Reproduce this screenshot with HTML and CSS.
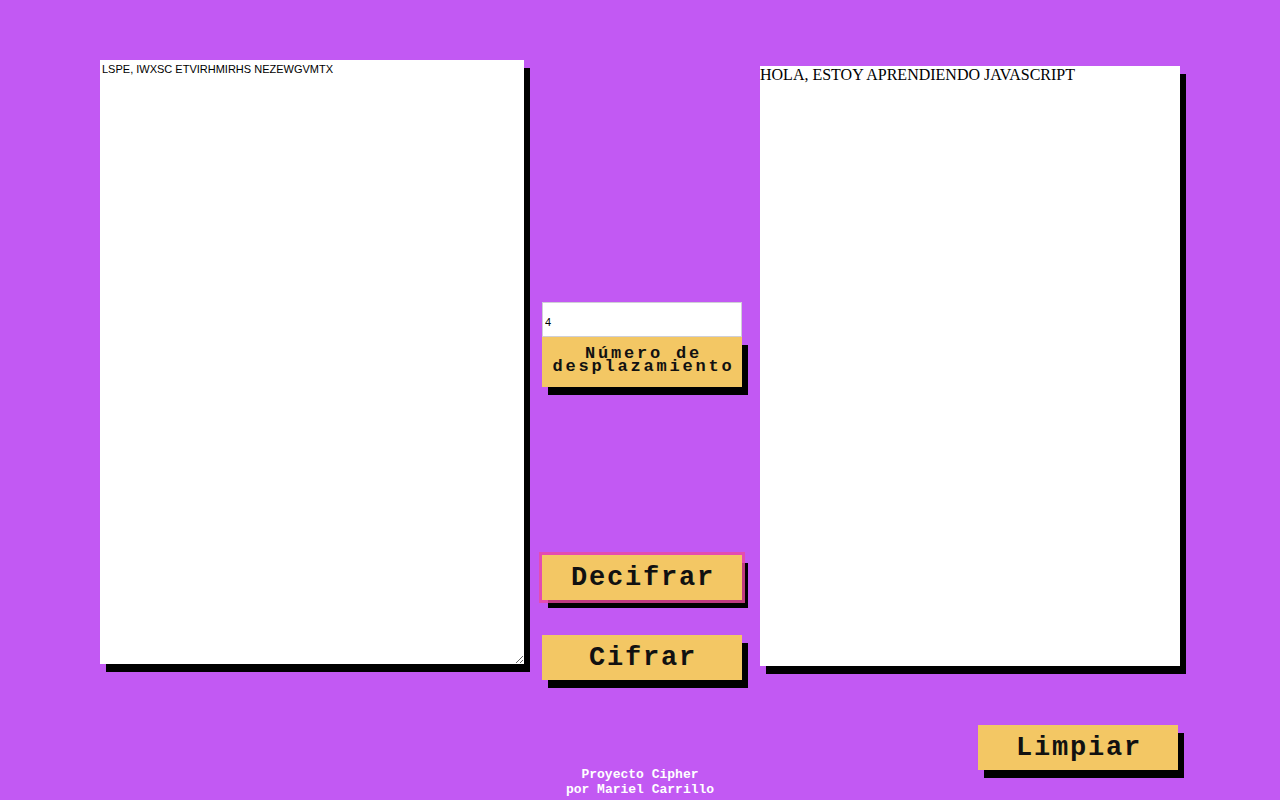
FILE: index.html
```html
<!DOCTYPE html>
<html lang="es">
<head>
<meta charset="utf-8">
<title>Cipher</title>
<link rel="stylesheet" href="styles.css">
</head>
<body>
<main class="main">
  <textarea class="text-in">LSPE, IWXSC ETVIRHMIRHS NEZEWGVMTX</textarea>
  <section class="middle">
    <div class="offset-group">
      <input class="offset-input" type="text" value="4">
      <label class="offset-label">Número de<br>desplazamiento</label>
    </div>
    <button class="btn btn-decifrar">Decifrar</button>
    <button class="btn btn-cifrar">Cifrar</button>
  </section>
  <div class="text-out">HOLA, ESTOY APRENDIENDO JAVASCRIPT</div>
</main>
<section class="bottom">
  <footer class="footer">Proyecto Cipher<br>por Mariel Carrillo</footer>
  <button class="btn btn-limpiar">Limpiar</button>
</section>
</body>
</html>
```
FILE: styles.css
```css
html, body {
  margin: 0;
  padding: 0;
}
body {
  background: #c259f3;
  width: 1280px;
  height: 800px;
  overflow: hidden;
}
.main {
  display: flex;
  align-items: flex-start;
  padding: 60px 0 0 100px;
  gap: 18px;
}
.text-in {
  box-sizing: border-box;
  width: 424px;
  height: 604px;
  margin: 0;
  padding: 3px 2px 2px;
  border: none;
  background: #fff;
  font-family: "Liberation Sans", Arial, sans-serif;
  font-size: 11px;
  line-height: 13px;
  color: #000;
  box-shadow: 6px 8px 0 #000;
  outline: none;
  resize: both;
}
.middle {
  display: flex;
  flex-direction: column;
  width: 200px;
  padding-top: 242px;
}
.offset-group {
  display: flex;
  flex-direction: column;
}
.offset-input {
  box-sizing: border-box;
  width: 200px;
  height: 35px;
  margin: 0;
  padding: 4px 2px 0;
  border: 1px solid #cfcfd6;
  background: #fff;
  font-family: "Liberation Sans", Arial, sans-serif;
  font-size: 11px;
  color: #000;
  outline: none;
}
.offset-label {
  box-sizing: border-box;
  height: 50px;
  background: #f3c764;
  box-shadow: 6px 8px 0 #000;
  font-family: "Liberation Mono", "DejaVu Sans Mono", monospace;
  font-weight: bold;
  font-size: 17px;
  letter-spacing: 2.8px;
  line-height: 13px;
  text-align: center;
  color: #111;
  padding-top: 10px;
  padding-left: 3px;
}
.btn {
  box-sizing: border-box;
  width: 200px;
  height: 45px;
  margin: 0;
  padding: 0 0 0 2px;
  border: none;
  background: #f3c764;
  box-shadow: 6px 8px 0 #000;
  font-family: "Liberation Mono", "DejaVu Sans Mono", monospace;
  font-weight: bold;
  font-size: 27px;
  letter-spacing: 1.8px;
  color: #111;
  cursor: pointer;
}
.btn-decifrar {
  margin-top: 168px;
  outline: 3px solid rgba(236, 72, 160, 0.8);
  outline-offset: 0;
}
.btn-cifrar {
  margin-top: 35px;
}
.text-out {
  box-sizing: border-box;
  width: 420px;
  height: 600px;
  margin-top: 6px;
  background: #fff;
  box-shadow: 6px 8px 0 #000;
  font-family: "Liberation Serif", "Times New Roman", serif;
  font-size: 16px;
  line-height: 18px;
  color: #000;
}
.bottom {
  display: grid;
  grid-template-columns: 1fr auto 1fr;
  height: 75px;
  margin-top: 45px;
}
.footer {
  grid-column: 2;
  align-self: end;
  margin-bottom: 3px;
  font-family: "Liberation Mono", "Courier New", monospace;
  font-weight: bold;
  font-size: 13px;
  line-height: 15px;
  text-align: center;
  color: #fff;
}
.btn-limpiar {
  grid-column: 3;
  align-self: start;
  justify-self: end;
  margin-right: 102px;
}
```
